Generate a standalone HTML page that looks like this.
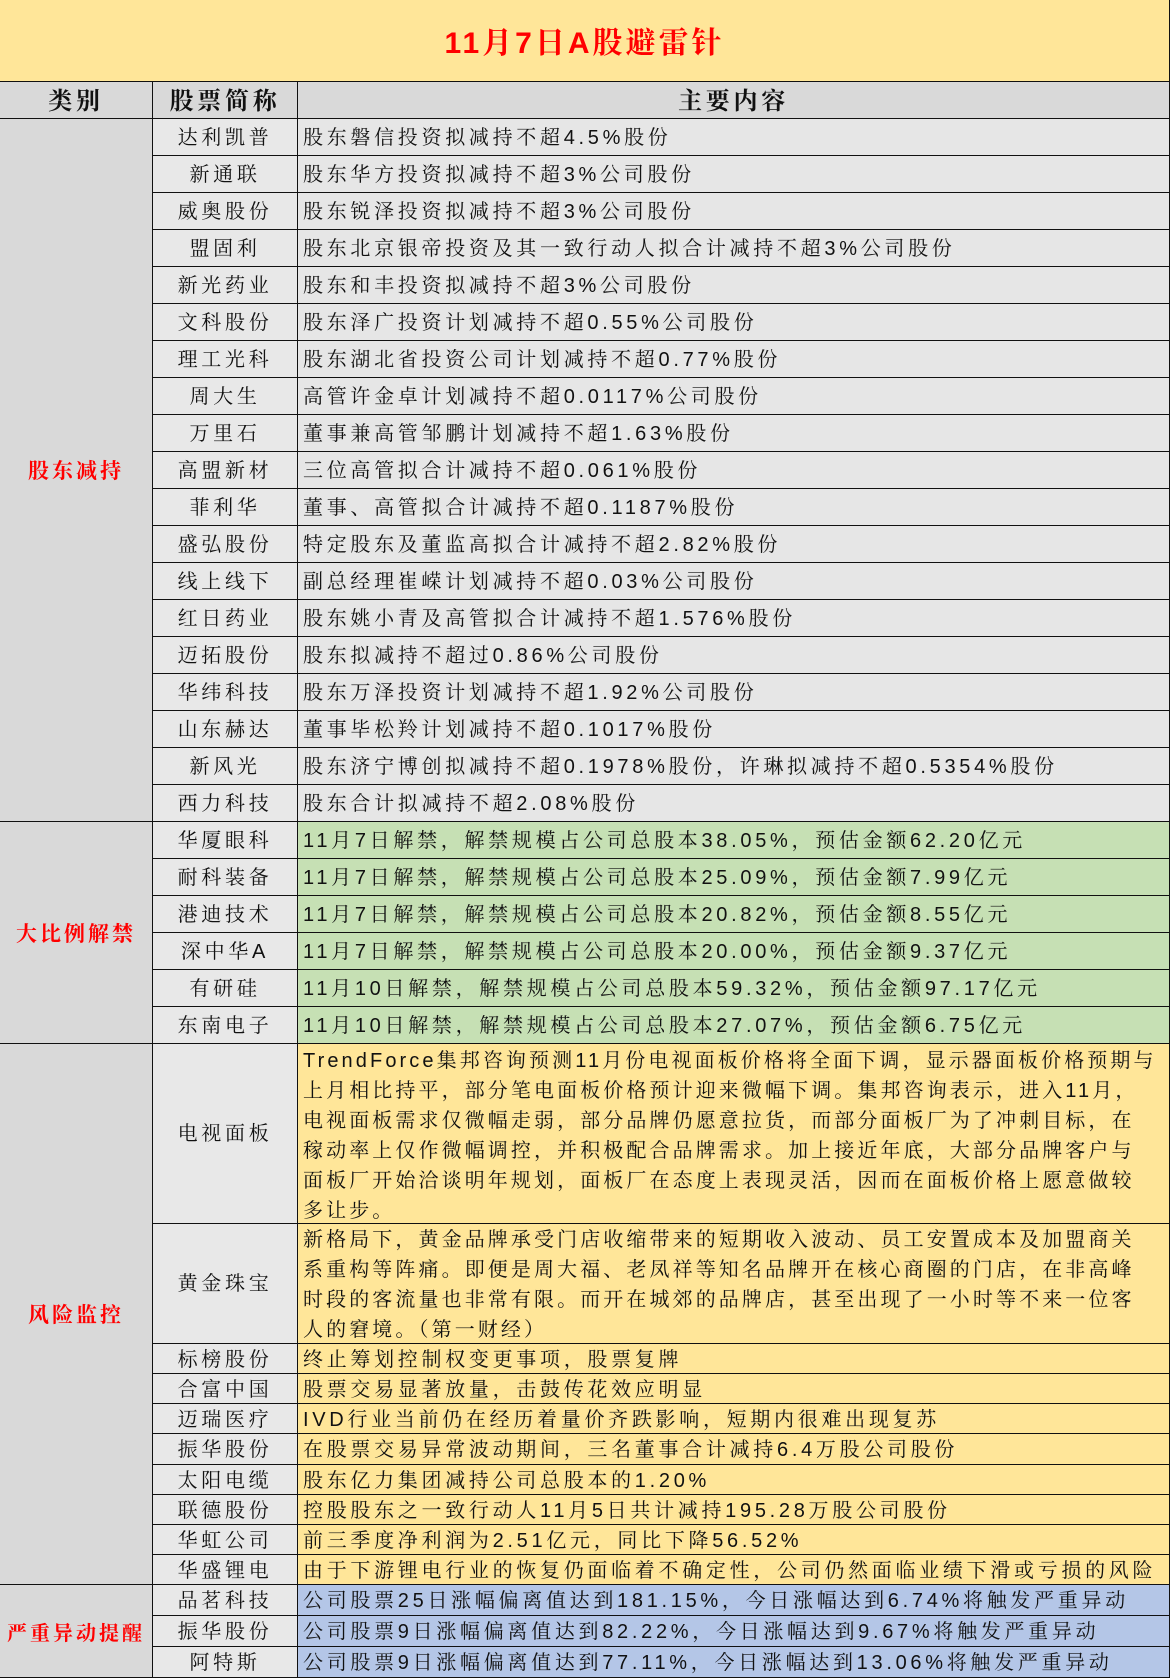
<!DOCTYPE html>
<html><head><meta charset="utf-8"><style>
*{margin:0;padding:0;box-sizing:border-box}
body{width:1170px;height:1678px;position:relative;background:#fff;font-family:"Liberation Sans","Noto Serif CJK SC",serif;color:#111;overflow:hidden}
div.c{position:absolute;border-right:1.5px solid #111;border-bottom:1.5px solid #111;white-space:nowrap;overflow:hidden;font-size:20px;letter-spacing:3.7px}
.t{left:0;top:0;width:1170px;height:82px;background:#ffe699;color:#f00;font-size:30px!important;font-weight:bold;text-align:center;line-height:88px;letter-spacing:3px!important}
.h{background:#d9d9d9;font-weight:bold;font-size:24px!important;text-align:center}
.a{left:0;width:153px;background:#d9d9d9;color:#f00;font-weight:bold;text-align:center;font-size:21px!important;letter-spacing:3px!important;display:flex;align-items:center;justify-content:center}
.b{left:153px;width:145px;background:#e8e8e8;text-align:center}
.d{left:298px;width:872px;padding-left:5px}
.g{background:#e6e6e6}.gr{background:#c6e0b4}.y{background:#ffe699}.bl{background:#b4c6e7}
.p{letter-spacing:3.1px!important}
</style></head><body>
<div class="c t">11月7日A股避雷针</div>
<div class="c h" style="left:0;top:82px;width:153px;height:37px;line-height:39px">类别</div>
<div class="c h" style="left:153px;top:82px;width:145px;height:37px;line-height:39px">股票简称</div>
<div class="c h" style="left:298px;top:82px;width:872px;height:37px;line-height:39px">主要内容</div>

<div class="c a" style="top:119px;height:703px">股东减持</div>
<div class="c a" style="top:822px;height:222px">大比例解禁</div>
<div class="c a" style="top:1044px;height:541px">风险监控</div>
<div class="c a" style="top:1585px;height:93px;font-size:20px!important">严重异动提醒</div>

<div class="c b" style="top:119px;height:37px;line-height:39px">达利凯普</div><div class="c d g" style="top:119px;height:37px;line-height:39px">股东磐信投资拟减持不超4.5%股份</div>
<div class="c b" style="top:156px;height:37px;line-height:39px">新通联</div><div class="c d g" style="top:156px;height:37px;line-height:39px">股东华方投资拟减持不超3%公司股份</div>
<div class="c b" style="top:193px;height:37px;line-height:39px">威奥股份</div><div class="c d g" style="top:193px;height:37px;line-height:39px">股东锐泽投资拟减持不超3%公司股份</div>
<div class="c b" style="top:230px;height:37px;line-height:39px">盟固利</div><div class="c d g" style="top:230px;height:37px;line-height:39px">股东北京银帝投资及其一致行动人拟合计减持不超3%公司股份</div>
<div class="c b" style="top:267px;height:37px;line-height:39px">新光药业</div><div class="c d g" style="top:267px;height:37px;line-height:39px">股东和丰投资拟减持不超3%公司股份</div>
<div class="c b" style="top:304px;height:37px;line-height:39px">文科股份</div><div class="c d g" style="top:304px;height:37px;line-height:39px">股东泽广投资计划减持不超0.55%公司股份</div>
<div class="c b" style="top:341px;height:37px;line-height:39px">理工光科</div><div class="c d g" style="top:341px;height:37px;line-height:39px">股东湖北省投资公司计划减持不超0.77%股份</div>
<div class="c b" style="top:378px;height:37px;line-height:39px">周大生</div><div class="c d g" style="top:378px;height:37px;line-height:39px">高管许金卓计划减持不超0.0117%公司股份</div>
<div class="c b" style="top:415px;height:37px;line-height:39px">万里石</div><div class="c d g" style="top:415px;height:37px;line-height:39px">董事兼高管邹鹏计划减持不超1.63%股份</div>
<div class="c b" style="top:452px;height:37px;line-height:39px">高盟新材</div><div class="c d g" style="top:452px;height:37px;line-height:39px">三位高管拟合计减持不超0.061%股份</div>
<div class="c b" style="top:489px;height:37px;line-height:39px">菲利华</div><div class="c d g" style="top:489px;height:37px;line-height:39px">董事、高管拟合计减持不超0.1187%股份</div>
<div class="c b" style="top:526px;height:37px;line-height:39px">盛弘股份</div><div class="c d g" style="top:526px;height:37px;line-height:39px">特定股东及董监高拟合计减持不超2.82%股份</div>
<div class="c b" style="top:563px;height:37px;line-height:39px">线上线下</div><div class="c d g" style="top:563px;height:37px;line-height:39px">副总经理崔嵘计划减持不超0.03%公司股份</div>
<div class="c b" style="top:600px;height:37px;line-height:39px">红日药业</div><div class="c d g" style="top:600px;height:37px;line-height:39px">股东姚小青及高管拟合计减持不超1.576%股份</div>
<div class="c b" style="top:637px;height:37px;line-height:39px">迈拓股份</div><div class="c d g" style="top:637px;height:37px;line-height:39px">股东拟减持不超过0.86%公司股份</div>
<div class="c b" style="top:674px;height:37px;line-height:39px">华纬科技</div><div class="c d g" style="top:674px;height:37px;line-height:39px">股东万泽投资计划减持不超1.92%公司股份</div>
<div class="c b" style="top:711px;height:37px;line-height:39px">山东赫达</div><div class="c d g" style="top:711px;height:37px;line-height:39px">董事毕松羚计划减持不超0.1017%股份</div>
<div class="c b" style="top:748px;height:37px;line-height:39px">新风光</div><div class="c d g" style="top:748px;height:37px;line-height:39px">股东济宁博创拟减持不超0.1978%股份，许琳拟减持不超0.5354%股份</div>
<div class="c b" style="top:785px;height:37px;line-height:39px">西力科技</div><div class="c d g" style="top:785px;height:37px;line-height:39px">股东合计拟减持不超2.08%股份</div>

<div class="c b" style="top:822px;height:37px;line-height:39px">华厦眼科</div><div class="c d gr" style="top:822px;height:37px;line-height:39px">11月7日解禁，解禁规模占公司总股本38.05%，预估金额62.20亿元</div>
<div class="c b" style="top:859px;height:37px;line-height:39px">耐科装备</div><div class="c d gr" style="top:859px;height:37px;line-height:39px">11月7日解禁，解禁规模占公司总股本25.09%，预估金额7.99亿元</div>
<div class="c b" style="top:896px;height:37px;line-height:39px">港迪技术</div><div class="c d gr" style="top:896px;height:37px;line-height:39px">11月7日解禁，解禁规模占公司总股本20.82%，预估金额8.55亿元</div>
<div class="c b" style="top:933px;height:37px;line-height:39px">深中华A</div><div class="c d gr" style="top:933px;height:37px;line-height:39px">11月7日解禁，解禁规模占公司总股本20.00%，预估金额9.37亿元</div>
<div class="c b" style="top:970px;height:37px;line-height:39px">有研硅</div><div class="c d gr" style="top:970px;height:37px;line-height:39px">11月10日解禁，解禁规模占公司总股本59.32%，预估金额97.17亿元</div>
<div class="c b" style="top:1007px;height:37px;line-height:39px">东南电子</div><div class="c d gr" style="top:1007px;height:37px;line-height:39px">11月10日解禁，解禁规模占公司总股本27.07%，预估金额6.75亿元</div>

<div class="c b" style="top:1044px;height:180px;line-height:180px">电视面板</div>
<div class="c d y p" style="top:1044px;height:180px;line-height:30px;padding-top:2px">TrendForce集邦咨询预测11月份电视面板价格将全面下调，显示器面板价格预期与<br>上月相比持平，部分笔电面板价格预计迎来微幅下调。集邦咨询表示，进入11月，<br>电视面板需求仅微幅走弱，部分品牌仍愿意拉货，而部分面板厂为了冲刺目标，在<br>稼动率上仅作微幅调控，并积极配合品牌需求。加上接近年底，大部分品牌客户与<br>面板厂开始洽谈明年规划，面板厂在态度上表现灵活，因而在面板价格上愿意做较<br>多让步。</div>
<div class="c b" style="top:1224px;height:120px;line-height:120px">黄金珠宝</div>
<div class="c d y p" style="top:1224px;height:120px;line-height:30px;padding-top:1px">新格局下，黄金品牌承受门店收缩带来的短期收入波动、员工安置成本及加盟商关<br>系重构等阵痛。即便是周大福、老凤祥等知名品牌开在核心商圈的门店，在非高峰<br>时段的客流量也非常有限。而开在城郊的品牌店，甚至出现了一小时等不来一位客<br>人的窘境。（第一财经）</div>

<div class="c b" style="top:1344px;height:30px;line-height:32px">标榜股份</div><div class="c d y" style="top:1344px;height:30px;line-height:32px">终止筹划控制权变更事项，股票复牌</div>
<div class="c b" style="top:1374px;height:30px;line-height:32px">合富中国</div><div class="c d y" style="top:1374px;height:30px;line-height:32px">股票交易显著放量，击鼓传花效应明显</div>
<div class="c b" style="top:1404px;height:30px;line-height:32px">迈瑞医疗</div><div class="c d y" style="top:1404px;height:30px;line-height:32px">IVD行业当前仍在经历着量价齐跌影响，短期内很难出现复苏</div>
<div class="c b" style="top:1434px;height:31px;line-height:33px">振华股份</div><div class="c d y" style="top:1434px;height:31px;line-height:33px">在股票交易异常波动期间，三名董事合计减持6.4万股公司股份</div>
<div class="c b" style="top:1465px;height:30px;line-height:32px">太阳电缆</div><div class="c d y" style="top:1465px;height:30px;line-height:32px">股东亿力集团减持公司总股本的1.20%</div>
<div class="c b" style="top:1495px;height:30px;line-height:32px">联德股份</div><div class="c d y" style="top:1495px;height:30px;line-height:32px">控股股东之一致行动人11月5日共计减持195.28万股公司股份</div>
<div class="c b" style="top:1525px;height:30px;line-height:32px">华虹公司</div><div class="c d y" style="top:1525px;height:30px;line-height:32px">前三季度净利润为2.51亿元，同比下降56.52%</div>
<div class="c b" style="top:1555px;height:30px;line-height:32px">华盛锂电</div><div class="c d y" style="top:1555px;height:30px;line-height:32px">由于下游锂电行业的恢复仍面临着不确定性，公司仍然面临业绩下滑或亏损的风险</div>

<div class="c b" style="top:1585px;height:31px;line-height:33px">品茗科技</div><div class="c d bl" style="top:1585px;height:31px;line-height:33px">公司股票25日涨幅偏离值达到181.15%，今日涨幅达到6.74%将触发严重异动</div>
<div class="c b" style="top:1616px;height:31px;line-height:33px">振华股份</div><div class="c d bl" style="top:1616px;height:31px;line-height:33px">公司股票9日涨幅偏离值达到82.22%，今日涨幅达到9.67%将触发严重异动</div>
<div class="c b" style="top:1647px;height:31px;line-height:33px">阿特斯</div><div class="c d bl" style="top:1647px;height:31px;line-height:33px">公司股票9日涨幅偏离值达到77.11%，今日涨幅达到13.06%将触发严重异动</div>
</body></html>
